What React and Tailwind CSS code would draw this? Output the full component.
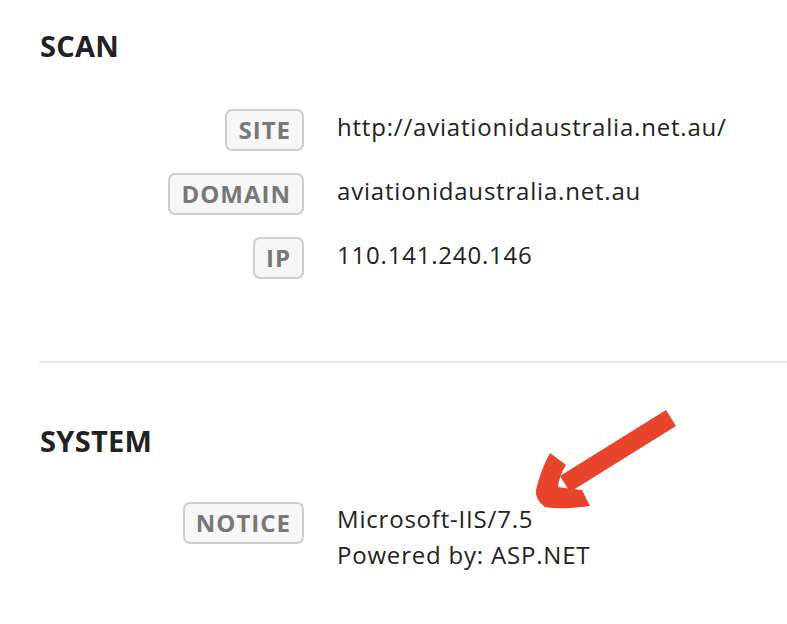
const scan = [
  { label: 'SITE', value: 'http://aviationidaustralia.net.au/' },
  { label: 'DOMAIN', value: 'aviationidaustralia.net.au' },
  { label: 'IP', value: '110.141.240.146' },
];

function Badge({ children }) {
  return (
    <span className="h-[42px] px-[11px] flex items-center rounded-[7px] border-2 border-[#cdcdcd] bg-[#f7f7f7] text-[24px] leading-none font-bold tracking-[1px] text-[#787878]">
      {children}
    </span>
  );
}

function Row({ label, children, last }) {
  return (
    <div className={`flex items-start ${last ? '' : 'mb-[22px]'}`}>
      <div className="w-[264px] flex justify-end shrink-0">
        <Badge>{label}</Badge>
      </div>
      <div className="ml-[33px] text-[24px] leading-[36px] tracking-[0.8px] text-[#222]">{children}</div>
    </div>
  );
}

export default function App() {
  return (
    <div
      className="relative w-[787px] h-[624px] bg-white overflow-hidden pl-[40px] pt-[32px]"
      style={{ fontFamily: '"Open Sans", "Noto Sans", sans-serif' }}
    >
      {/* Scan */}
      <h2 className="text-[29px] leading-[28px] font-bold tracking-[0.3px] text-[#222]">SCAN</h2>
      <div className="mt-[49px]">
        {scan.map((r, i) => (
          <Row key={r.label} label={r.label} last={i === scan.length - 1}>
            {r.value}
          </Row>
        ))}
      </div>

      <div className="mt-[82px] -ml-[1px] h-[2px] bg-[#e6e6e6]" />

      {/* System */}
      <h2 className="mt-[64px] text-[29px] leading-[28px] font-bold tracking-[0.3px] text-[#222]">SYSTEM</h2>
      <div className="mt-[47px]">
        <Row label="NOTICE" last>
          <div className="-mt-[1px]">
            <div>Microsoft-IIS/7.5</div>
            <div>Powered by: ASP.NET</div>
          </div>
        </Row>
      </div>

      {/* annotation arrow */}
      <svg className="absolute left-0 top-0 pointer-events-none" width="787" height="624">
        <polygon points="666,410 676,426 570,492 560,476" fill="#e8442c" />
        <path
          d="M 550 453 L 566 465 Q 559 476 558 487 Q 571 489 582 490 L 590 506 Q 560 510 545 507 Q 535 500 536 490 Q 541 469 550 453 Z"
          fill="#e8442c"
        />
      </svg>
    </div>
  );
}
